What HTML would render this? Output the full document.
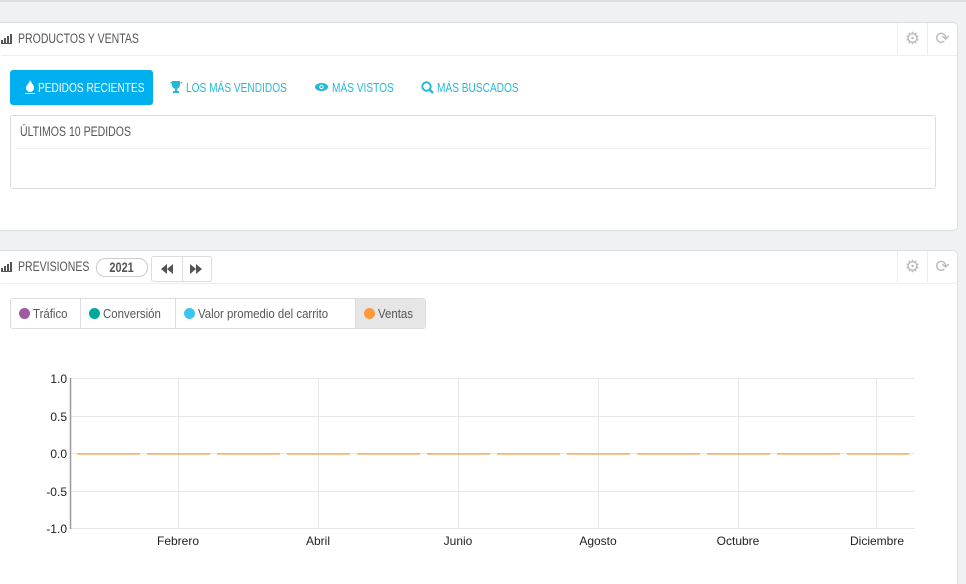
<!DOCTYPE html>
<html><head><meta charset="utf-8"><style>
html,body{margin:0;width:966px;height:584px;overflow:hidden;}
body{background:#eff1f2;position:relative;font-family:"Liberation Sans",sans-serif;}
.n{display:inline-block;white-space:nowrap;transform:scaleX(.78);transform-origin:0 50%;}
.panel{position:absolute;left:-6px;width:962px;background:#fff;border:1px solid #dcdfe2;border-radius:5px;}
.hd{position:absolute;left:6px;top:0;right:0;height:32px;border-bottom:1px solid #eee;font-size:13px;color:#555;line-height:32px;white-space:nowrap}
.ic{position:absolute;left:0;top:11px;}
.tools{position:absolute;right:0;top:0;height:32px;display:flex}
.tools div{width:29px;border-left:1px solid #eee;color:#bbb;font-size:17px;text-align:center;line-height:32px;}
.tab{position:absolute;top:70px;height:35px;line-height:35px;font-size:13px;color:#25b9d7;white-space:nowrap}
.tab svg{position:absolute;top:11px;left:0}
.tab .n{position:absolute;left:14px;top:0}
.lg{position:absolute;top:0;height:29px;border-right:1px solid #ddd;box-sizing:border-box}
.lg i{position:absolute;left:8px;top:9px;width:11px;height:11px;border-radius:50%}
.lg .n{position:absolute;left:22px;top:0;transform:scaleX(.88)}
</style></head><body>
<div style="position:absolute;top:0;left:0;width:966px;height:2px;background:#dcdfe2"></div>
<div class="panel" style="top:22px;height:207px;">
 <div class="hd"><svg class="ic" width="11" height="10"><g fill="#555"><rect x="0" y="6" width="2" height="3"/><rect x="3" y="4" width="2" height="5"/><rect x="6" y="2" width="2" height="7"/><rect x="9" y="0" width="2" height="9"/><rect x="0" y="9" width="11" height="1"/></g></svg><span class="n" style="position:absolute;left:17px;font-size:13.5px">PRODUCTOS Y VENTAS</span>
  <div class="tools"><div>⚙</div><div>⟳</div></div></div>
</div>
<div class="tab" style="left:10px;width:143px;background:#00aff0;color:#fff;border-radius:3px;">
 <svg width="10" height="14" style="left:15px;top:10px"><path d="M5 0C7 4 9 5 9 8a4 4 0 0 1-8 0C1 5 4 4 5 0z" fill="#fff"/><rect x="0" y="13" width="10" height="1" fill="#fff"/></svg>
 <span class="n" style="left:28px">PEDIDOS RECIENTES</span></div>
<div class="tab" style="left:170px"><svg width="12" height="12"><path d="M2 0h8v4a4 4 0 0 1-8 0z M0 1h2v2a2 2 0 0 0 0 0M10 1h2v2M5 8h2v2H5zM3 10h6v2H3z" fill="#25b9d7"/></svg><span class="n" style="left:16px">LOS MÁS VENDIDOS</span></div>
<div class="tab" style="left:315px"><svg width="13" height="12"><ellipse cx="6.5" cy="6" rx="6.5" ry="4" fill="#25b9d7"/><circle cx="6.5" cy="6" r="2.2" fill="#fff"/><circle cx="6.5" cy="6" r="1.2" fill="#25b9d7"/></svg><span class="n" style="left:17px">MÁS VISTOS</span></div>
<div class="tab" style="left:421px"><svg width="13" height="13"><circle cx="5.5" cy="5.5" r="4.2" fill="none" stroke="#25b9d7" stroke-width="2"/><path d="M8.5 8.5l3.5 3.5" stroke="#25b9d7" stroke-width="2.4"/></svg><span class="n" style="left:16px">MÁS BUSCADOS</span></div>
<div style="position:absolute;left:10px;top:115px;width:924px;height:72px;border:1px solid #ddd;border-radius:3px;background:#fff">
 <div class="n" style="position:absolute;left:9px;top:0;height:32px;line-height:32px;font-size:13.5px;color:#555">ÚLTIMOS 10 PEDIDOS</div>
 <div style="position:absolute;left:5px;right:5px;top:32px;border-top:1px solid #eee"></div>
</div>

<div class="panel" style="top:250px;height:360px;">
 <div class="hd"><svg class="ic" width="11" height="10"><g fill="#555"><rect x="0" y="6" width="2" height="3"/><rect x="3" y="4" width="2" height="5"/><rect x="6" y="2" width="2" height="7"/><rect x="9" y="0" width="2" height="9"/><rect x="0" y="9" width="11" height="1"/></g></svg><span class="n" style="position:absolute;left:17px;font-size:13.5px">PREVISIONES</span>
  <span style="position:absolute;left:95px;top:7px;width:50px;height:17px;border:1px solid #ccc;border-radius:9px;line-height:17px;text-align:center;font-weight:bold;font-size:14px;color:#555"><span class="n" style="transform-origin:50% 50%">2021</span></span>
  <span style="position:absolute;left:150px;top:5px;width:59px;height:24px;border:1px solid #ddd;border-radius:3px;">
   <svg width="60" height="24" style="position:absolute;left:0;top:0"><line x1="30.5" y1="0" x2="30.5" y2="24" stroke="#ddd"/><path d="M9 12l6-5v10zM15 12l6-5v10z" fill="#555"/><path d="M38 7l6 5-6 5zM44 7l6 5-6 5z" fill="#555"/></svg></span>
  <div class="tools"><div>⚙</div><div>⟳</div></div></div>
</div>
<div style="position:absolute;left:10px;top:298px;width:414px;height:29px;border:1px solid #ddd;border-radius:3px;font-size:13px;color:#555;background:#fff;line-height:29px;overflow:hidden">
 <div class="lg" style="left:0;width:70px"><i style="background:#9e5ba1"></i><span class="n">Tráfico</span></div>
 <div class="lg" style="left:70px;width:95px"><i style="background:#00a89c"></i><span class="n">Conversión</span></div>
 <div class="lg" style="left:165px;width:180px"><i style="background:#3ac6f0"></i><span class="n">Valor promedio del carrito</span></div>
 <div class="lg" style="left:345px;width:69px;background:#e6e6e6;border:0"><i style="background:#ff9838"></i><span class="n">Ventas</span></div>
</div>
<svg style="position:absolute;left:0;top:0" width="966" height="584">
 <g stroke="#e8e8e8" stroke-width="1">
  <line x1="70" y1="378.5" x2="915" y2="378.5"/><line x1="70" y1="416.5" x2="915" y2="416.5"/>
  <line x1="70" y1="453.5" x2="915" y2="453.5"/><line x1="70" y1="491.5" x2="915" y2="491.5"/>
  <line x1="70" y1="528.5" x2="915" y2="528.5"/>
  <line x1="178.5" y1="378" x2="178.5" y2="528"/><line x1="318.5" y1="378" x2="318.5" y2="528"/>
  <line x1="458.5" y1="378" x2="458.5" y2="528"/><line x1="598.5" y1="378" x2="598.5" y2="528"/>
  <line x1="738.5" y1="378" x2="738.5" y2="528"/><line x1="876.5" y1="378" x2="876.5" y2="528"/>
 </g>
 <line x1="70.5" y1="378" x2="70.5" y2="529" stroke="#999" stroke-width="1.5"/>
 <line x1="77" y1="454" x2="909" y2="454" stroke="#f0a04b" stroke-width="1.2" stroke-dasharray="63 7"/>
 <g font-family="Liberation Sans,sans-serif" font-size="12" fill="#222" text-anchor="end">
  <text x="67" y="383">1.0</text><text x="67" y="421">0.5</text><text x="67" y="458">0.0</text><text x="67" y="496">-0.5</text><text x="67" y="533">-1.0</text>
 </g>
 <g font-family="Liberation Sans,sans-serif" font-size="12" fill="#222" text-anchor="middle">
  <text x="178" y="545">Febrero</text><text x="318" y="545">Abril</text><text x="458" y="545">Junio</text><text x="598" y="545">Agosto</text><text x="738" y="545">Octubre</text><text x="877" y="545">Diciembre</text>
 </g>
</svg>
</body></html>
